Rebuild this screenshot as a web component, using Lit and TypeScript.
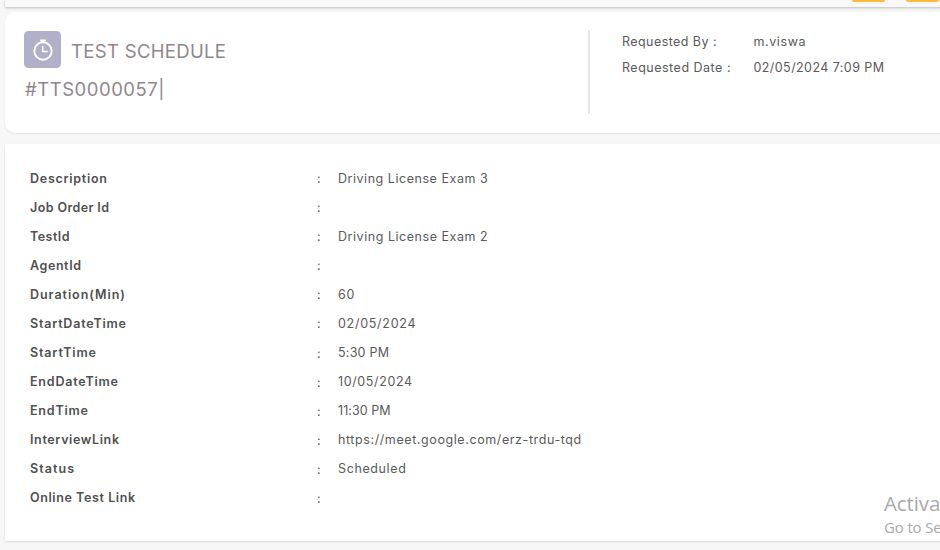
import { LitElement, html, css } from "lit";
import { customElement, property } from "lit/decorators.js";

/** A single line of text whose tracking is spread to fill a given width. */
@customElement("tracked-text")
class TrackedText extends LitElement {
  @property() text = "";
  @property({ type: Number }) width = 0;

  static styles = css`
    :host { display: block; white-space: pre; }
    .line { display: inline-block; }
  `;

  render() {
    return html`<span class="line">${this.text}</span>`;
  }

  updated() {
    const line = this.renderRoot.querySelector<HTMLElement>(".line");
    if (!line || this.text.length < 2) return;
    line.style.letterSpacing = "0px";
    const natural = line.getBoundingClientRect().width;
    line.style.letterSpacing = `${(this.width - natural) / (this.text.length - 1)}px`;
  }
}

type Cell = [string, number];

const META: [Cell, Cell][] = [
  [["Requested By :", 94.5], ["m.viswa", 52]],
  [["Requested Date :", 108.5], ["02/05/2024 7:09 PM", 130.5]],
];

const ROWS: [Cell, Cell][] = [
  [["Description", 77], ["Driving License Exam 3", 149.7]],
  [["Job Order Id", 79], ["", 0]],
  [["TestId", 39.5], ["Driving License Exam 2", 149.7]],
  [["AgentId", 51], ["", 0]],
  [["Duration(Min)", 95], ["60", 16.5]],
  [["StartDateTime", 96], ["02/05/2024", 77.5]],
  [["StartTime", 66], ["5:30 PM", 51]],
  [["EndDateTime", 88], ["10/05/2024", 74]],
  [["EndTime", 58], ["11:30 PM", 52.5]],
  [["InterviewLink", 89], ["https://meet.google.com/erz-trdu-tqd", 243.2]],
  [["Status", 44], ["Scheduled", 67.8]],
  [["Online Test Link", 105], ["", 0]],
];

const line = ([text, width]: Cell, cls: string) =>
  html`<tracked-text class=${cls} .text=${text} .width=${width}></tracked-text>`;

@customElement("app-root")
class AppRoot extends LitElement {
  static styles = css`
    * { box-sizing: border-box; }
    :host {
      display: flex;
      flex-direction: column;
      position: relative;
      width: 940px;
      height: 550px;
      padding-left: 5px;
      overflow: hidden;
      background: #f7f7f7;
      color: #5a5a5a;
      font: 12.5px/18px Inter, "Liberation Sans", sans-serif;
    }
    .toolbar {
      flex: none;
      display: flex;
      gap: 21px;
      height: 7px;
      padding-left: 847px;
      background: #f8f8f8;
      box-shadow: 0 1px 3px rgba(0, 0, 0, 0.24);
    }
    .btn { width: 33px; height: 2px; flex: none; background: #ffb93c; border-radius: 0 0 3px 3px; }
    .head {
      flex: none;
      display: flex;
      height: 121px;
      margin-top: 5px;
      padding: 18px 0 0 19px;
      background: #fff;
      border-radius: 10px 0 0 10px;
      box-shadow: 0 1px 2px rgba(40, 40, 70, 0.1);
    }
    .title { width: 564px; color: #8f878d; font-size: 18.5px; line-height: 24px; }
    .name { display: flex; align-items: center; gap: 10px; height: 38px; }
    .name .heading { padding-top: 3px; }
    .icon { display: block; width: 37px; height: 37px; }
    .number { margin-top: 9px; padding-left: 1px; }
    .meta {
      height: 84px;
      padding: 3px 0 0 32px;
      border-left: 2px solid #e6e6e8;
    }
    .pair { display: grid; grid-template-columns: 131.5px auto; height: 26px; }
    .details {
      flex: none;
      height: 397px;
      margin-top: 11px;
      padding: 20px 0 0 25px;
      background: #fff;
      box-shadow: 0 1px 2px rgba(0, 0, 0, 0.11);
    }
    .row {
      display: grid;
      grid-template-columns: 287px 21px auto;
      align-items: center;
      height: 29.09px;
    }
    .label { font-weight: 600; color: #505050; }
    .colon { padding-top: 1px; }
    .watermark {
      position: absolute;
      left: 884px;
      top: 489px;
      color: #a9a9a9;
      font-family: "Open Sans", "Noto Sans", sans-serif;
      white-space: nowrap;
    }
    .big { font-size: 20.5px; line-height: 28px; letter-spacing: -0.1px; }
    .small { font-size: 15px; line-height: 20px; letter-spacing: -0.15px; }
  `;

  render() {
    return html`
      <div class="toolbar"><div class="btn"></div><div class="btn"></div></div>
      <section class="head">
        <div class="title">
          <div class="name">
            <svg class="icon" viewBox="0 0 37 37">
              <rect width="37" height="37" rx="4.5" fill="#b2b0c8" />
              <g fill="none" stroke="#fff">
                <circle cx="19" cy="20" r="8.7" stroke-width="1.9" />
                <path d="M16.2 9.6h5.6M19 9.5v2.2" stroke-width="2" />
                <path d="M18.7 15v5.4h5" stroke-width="1.5" />
              </g>
            </svg>
            ${line(["TEST SCHEDULE", 155], "heading")}
          </div>
          ${line(["#TTS0000057|", 139.5], "number")}
        </div>
        <div class="meta">
          ${META.map(([k, v]) => html`<div class="pair">${line(k, "")}${line(v, "")}</div>`)}
        </div>
      </section>
      <section class="details">
        ${ROWS.map(
          ([k, v]) => html`<div class="row">
            ${line(k, "label")}<span class="colon">:</span>${line(v, "value")}
          </div>`
        )}
      </section>
      <div class="watermark">
        <div class="big">Activa</div>
        <div class="small">Go to Se</div>
      </div>
    `;
  }
}
